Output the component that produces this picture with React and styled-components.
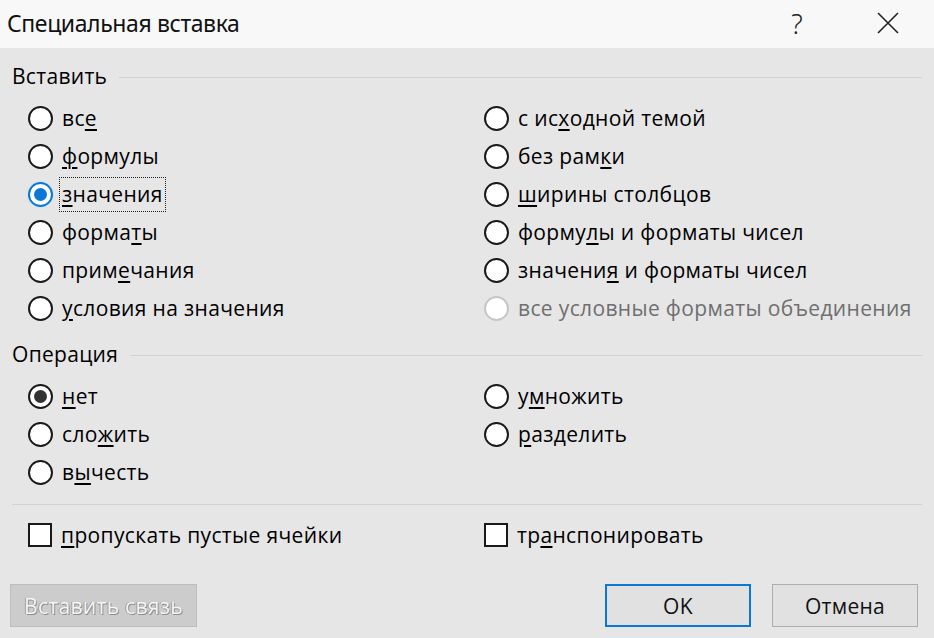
import React from "react";
import styled, { createGlobalStyle } from "styled-components";

const GlobalStyle = createGlobalStyle`
  html, body {
    margin: 0;
    padding: 0;
    background: #e6e6e6;
  }
  body {
    font-family: "Open Sans", "Noto Sans", "DejaVu Sans", sans-serif;
  }
`;

const pasteLeft = [
  { text: "все", key: 2 },
  { text: "формулы", key: 0 },
  { text: "значения", key: 0, state: "focus" },
  { text: "форматы", key: 5 },
  { text: "примечания", key: 4 },
  { text: "условия на значения", key: 0 },
];

const pasteRight = [
  { text: "с исходной темой", key: 4 },
  { text: "без рамки", key: 7 },
  { text: "ширины столбцов", key: 0 },
  { text: "формулы и форматы чисел", key: 5 },
  { text: "значения и форматы чисел", key: 7 },
  { text: "все условные форматы объединения", key: -1, state: "disabled" },
];

const opLeft = [
  { text: "нет", key: 0, state: "checked" },
  { text: "сложить", key: 3 },
  { text: "вычесть", key: 1 },
];

const opRight = [
  { text: "умножить", key: 1 },
  { text: "разделить", key: 0 },
];

/* ---------------------------
 *    styled parts
 * ---------------------------
 */

const Dialog = styled.div`
  width: 934px;
  height: 638px;
  display: flex;
  flex-direction: column;
  background: #e6e6e6;
  color: #000;
  overflow: hidden;
`;

const TitleBar = styled.div`
  height: 48px;
  flex: none;
  background: #f8f8f8;
  display: flex;
  align-items: center;
  padding: 0 0 2px 7px;
  box-sizing: border-box;
`;

const Title = styled.div`
  flex: 1;
  font-family: "Noto Sans", sans-serif;
  font-size: 23px;
  letter-spacing: -0.4px;
  color: #111;
`;

const HelpMark = styled.div`
  width: 34px;
  text-align: center;
  font-family: "Noto Sans", sans-serif;
  font-size: 27px;
  font-weight: 300;
  color: #222;
  margin-right: 52px;
`;

const CloseBox = styled.div`
  width: 44px;
  display: flex;
  justify-content: center;
  margin-right: 24px;
`;

const Body = styled.div`
  flex: 1;
  padding: 9px 12px 0;
  display: flex;
  flex-direction: column;
`;

const GroupHead = styled.div`
  height: 38px;
  display: flex;
  align-items: center;
  gap: 12px;
  margin-top: ${p => p.$top || 0}px;
  font-size: 21px;
  letter-spacing: 0.3px;
`;

const Rule = styled.div`
  flex: 1;
  height: 1px;
  background: #d2d2d2;
  margin-top: 2px;
`;

const Options = styled.div`
  display: grid;
  grid-template-columns: 456px 1fr;
  padding: 4px 0 0 16px;
`;

const Column = styled.div`
  display: flex;
  flex-direction: column;
`;

const Row = styled.label`
  height: 38px;
  display: flex;
  align-items: center;
  gap: 9px;
  font-size: 21px;
  letter-spacing: 0.35px;
  color: ${p => (p.$disabled ? "#6f6f6f" : "#000")};
`;

const Radio = styled.span`
  width: 25px;
  height: 25px;
  box-sizing: border-box;
  border-radius: 50%;
  flex: none;
  background: #fff;
  border: 2px solid ${p =>
    p.$state === "focus" ? "#0a78d4" : p.$state === "disabled" ? "#c6c6c6" : "#1a1a1a"};
  display: flex;
  align-items: center;
  justify-content: center;
  box-shadow: ${p => (p.$state === "focus" ? "0 0 0 1px #cfe4f7" : "none")};

  &::after {
    content: "";
    width: 13px;
    height: 13px;
    border-radius: 50%;
    display: ${p => (p.$state === "focus" || p.$state === "checked" ? "block" : "none")};
    background: ${p => (p.$state === "focus" ? "#0a78d4" : "#333")};
  }
`;

const Caption = styled.span`
  padding: 1px 2px;
  margin-left: -3px;
  border: 1px dotted ${p => (p.$focus ? "#222" : "transparent")};
  line-height: 31px;
`;

const Key = styled.span`
  text-decoration: underline;
  text-decoration-thickness: 2px;
  text-underline-offset: 3px;
`;

const Separator = styled.div`
  height: 1px;
  background: #d2d2d2;
  margin: 13px 0 0;
`;

const Checks = styled.div`
  display: grid;
  grid-template-columns: 456px 1fr;
  padding: 11px 0 0 16px;
`;

const Check = styled.span`
  width: 24px;
  height: 24px;
  flex: none;
  box-sizing: border-box;
  border: 2px solid #1a1a1a;
  background: #fff;
`;

const Buttons = styled.div`
  display: flex;
  align-items: center;
  margin-top: 30px;
  margin-left: -2px;
`;

const Button = styled.div`
  height: 43px;
  box-sizing: border-box;
  display: flex;
  align-items: center;
  justify-content: center;
  font-size: 21px;
  letter-spacing: 0.3px;
  width: ${p => p.$w}px;
  margin-left: ${p => p.$ml || 0}px;
  background: ${p => (p.$disabled ? "#cccccc" : "#e1e1e1")};
  border: ${p =>
    p.$primary ? "2px solid #0a78d4" : p.$disabled ? "1px solid #bdbdbd" : "1px solid #adadad"};
  color: ${p => (p.$disabled ? "#f5f5f5" : "#111")};
  text-shadow: ${p =>
    p.$disabled ? "1px 1px 0 #8e8e8e, -1px 0 0 #9a9a9a" : "none"};
`;

// ---------------------------

function Label({ text, index, focus }) {
  if (index < 0) return <Caption $focus={focus}>{text}</Caption>;
  return (
    <Caption $focus={focus}>
      {text.slice(0, index)}
      <Key>{text[index]}</Key>
      {text.slice(index + 1)}
    </Caption>
  );
}

function RadioRow({ item }) {
  return (
    <Row $disabled={item.state === "disabled"}>
      <Radio $state={item.state} />
      <Label text={item.text} index={item.key} focus={item.state === "focus"} />
    </Row>
  );
}

function CloseIcon() {
  return (
    <svg width="24" height="24" viewBox="0 0 24 24">
      <path d="M2 2 L22 22 M22 2 L2 22" stroke="#222" strokeWidth="1.6" fill="none" />
    </svg>
  );
}

export default function App() {
  return (
    <>
      <GlobalStyle />
      <Dialog>
        <TitleBar>
          <Title>Специальная вставка</Title>
          <HelpMark>?</HelpMark>
          <CloseBox>
            <CloseIcon />
          </CloseBox>
        </TitleBar>

        <Body>
          <GroupHead>
            Вставить
            <Rule />
          </GroupHead>
          <Options>
            <Column>
              {pasteLeft.map(item => <RadioRow key={item.text} item={item} />)}
            </Column>
            <Column>
              {pasteRight.map(item => <RadioRow key={item.text} item={item} />)}
            </Column>
          </Options>

          <GroupHead $top={8}>
            Операция
            <Rule />
          </GroupHead>
          <Options>
            <Column>
              {opLeft.map(item => <RadioRow key={item.text} item={item} />)}
            </Column>
            <Column>
              {opRight.map(item => <RadioRow key={item.text} item={item} />)}
            </Column>
          </Options>

          <Separator />

          <Checks>
            <Row>
              <Check />
              <Label text="пропускать пустые ячейки" index={0} />
            </Row>
            <Row>
              <Check />
              <Label text="транспонировать" index={2} />
            </Row>
          </Checks>

          <Buttons>
            <Button $w={187} $disabled>Вставить связь</Button>
            <Button $w={146} $ml={408} $primary>OK</Button>
            <Button $w={146} $ml={21}>Отмена</Button>
          </Buttons>
        </Body>
      </Dialog>
    </>
  );
}
